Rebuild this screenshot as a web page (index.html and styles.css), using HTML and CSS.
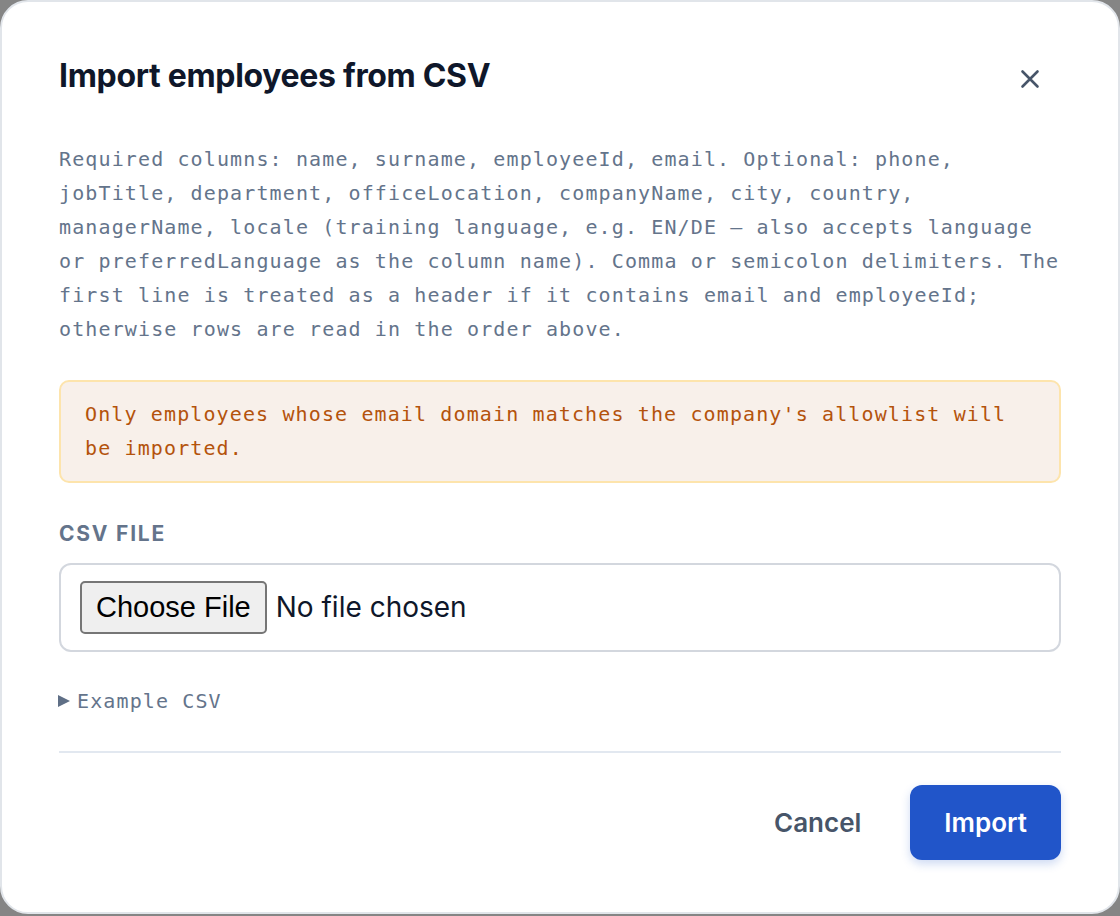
FILE: index.html
```html
<!DOCTYPE html>
<html lang="en">
<head>
<meta charset="utf-8">
<title>Import employees from CSV</title>
<link rel="stylesheet" href="styles.css">
</head>
<body>
<div class="dialog">
  <div class="header">
    <h2 class="title">Import employees from CSV</h2>
    <button class="close" aria-label="Close">
      <svg width="20" height="20" viewBox="0 0 20 20"><path d="M2.5 2.5 L17.5 17.5 M17.5 2.5 L2.5 17.5" stroke="#475569" stroke-width="2.6" stroke-linecap="round" fill="none"/></svg>
    </button>
  </div>
  <p class="desc">Required columns: name, surname, employeeId, email. Optional: phone, jobTitle, department, officeLocation, companyName, city, country, managerName, locale (training language, e.g. EN/DE — also accepts language or preferredLanguage as the column name). Comma or semicolon delimiters. The first line is treated as a header if it contains email and employeeId; otherwise rows are read in the order above.</p>
  <div class="warning">Only employees whose email domain matches the company's allowlist will be imported.</div>
  <label class="label" for="csv">CSV File</label>
  <div class="file-box"><input class="file" type="file" id="csv" accept=".csv"></div>
  <details class="example"><summary>Example CSV</summary></details>
  <div class="divider"></div>
  <div class="actions">
    <button class="btn cancel">Cancel</button>
    <button class="btn import">Import</button>
  </div>
</div>
</body>
</html>
```

FILE: styles.css
```css
html {
  background: #858585;
}
body {
  margin: 0;
  font-family: Inter, "Noto Sans", sans-serif;
}
.dialog {
  box-sizing: border-box;
  width: 1120px;
  height: 914px;
  background: #ffffff;
  border: 2px solid #e1e5ea;
  border-radius: 28px;
  padding: 54px 57px 0;
  display: flex;
  flex-direction: column;
}
.header {
  display: flex;
  justify-content: space-between;
  align-items: flex-start;
  height: 40px;
}
.title {
  margin: 0;
  font-size: 32px;
  line-height: 40px;
  font-weight: 700;
  color: #0f172a;
  letter-spacing: -0.01em;
}
.close {
  width: 40px;
  height: 40px;
  margin: 3px 11px 0 0;
  padding: 0;
  border: none;
  background: transparent;
  display: flex;
  align-items: center;
  justify-content: center;
  cursor: pointer;
}
.desc {
  margin: 46px 0 0;
  font-family: "DejaVu Sans Mono", monospace;
  font-size: 20px;
  line-height: 34px;
  letter-spacing: 1.12px;
  color: #64748b;
}
.warning {
  margin-top: 34px;
  padding: 15px 24px 16px;
  border: 2px solid #fde4ac;
  border-radius: 10px;
  background: #f8f0ea;
  color: #b4530c;
  font-family: "DejaVu Sans Mono", monospace;
  font-size: 20px;
  line-height: 34px;
  letter-spacing: 1.12px;
}
.label {
  margin-top: 37px;
  font-size: 21px;
  line-height: 28px;
  font-weight: 650;
  text-transform: uppercase;
  letter-spacing: 0.085em;
  color: #64748b;
}
.file-box {
  box-sizing: border-box;
  margin-top: 15px;
  height: 89px;
  border: 2px solid #d3d7de;
  border-radius: 12px;
  padding: 0 19px;
  display: flex;
  align-items: center;
}
.file {
  font-family: Inter, sans-serif;
  font-size: 28px;
  color: #0f172a;
}
.file::file-selector-button {
  box-sizing: border-box;
  height: 53px;
  padding: 0 14px;
  margin-right: 9px;
  font-family: "Liberation Sans", Arial, sans-serif;
  font-size: 29px;
  color: #000000;
  background: #efefef;
  border: 2px solid #767676;
  border-radius: 5px;
}
.example {
  margin-top: 32px;
  font-family: "DejaVu Sans Mono", monospace;
  font-size: 20px;
  line-height: 34px;
  letter-spacing: 1.12px;
  color: #64748b;
}
.example summary {
  list-style: none;
  display: flex;
  align-items: center;
  cursor: pointer;
}
.example summary::-webkit-details-marker {
  display: none;
}
.example summary::before {
  content: "";
  width: 0;
  height: 0;
  border-left: 12px solid #5f6f86;
  border-top: 6.5px solid transparent;
  border-bottom: 6.5px solid transparent;
  margin: 0 7px 0 -1px;
}
.divider {
  margin-top: 33px;
  height: 2px;
  background: #e2e8f0;
}
.actions {
  margin-top: 32px;
  display: flex;
  justify-content: flex-end;
  gap: 15px;
}
.btn {
  height: 75px;
  padding: 0 34px;
  border: none;
  border-radius: 12px;
  font-family: Inter, sans-serif;
  font-size: 26px;
  font-weight: 600;
  cursor: pointer;
}
.cancel {
  background: transparent;
  color: #475569;
}
.import {
  background: #2155c9;
  color: #ffffff;
  box-shadow: 0 4px 10px rgba(33, 85, 201, 0.22);
}
```
